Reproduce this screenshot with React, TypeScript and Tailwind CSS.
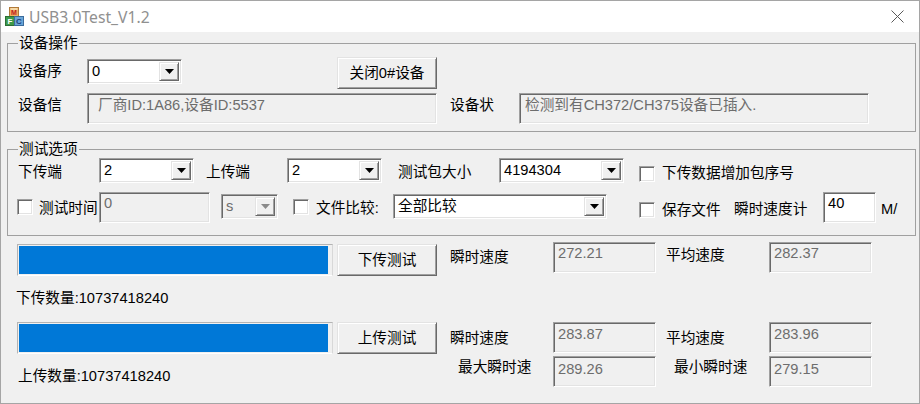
const sunken =
  'border border-t-[#a0a0a0] border-l-[#a0a0a0] border-r-white border-b-white shadow-[inset_1px_1px_0_#696969,inset_-1px_-1px_0_#e3e3e3]';
const raised =
  'border border-t-[#e3e3e3] border-l-[#e3e3e3] border-r-[#696969] border-b-[#696969] shadow-[inset_1px_1px_0_#ffffff,inset_-1px_-1px_0_#a0a0a0]';

function Combo({ value, className, disabled }: { value: string; className: string; disabled?: boolean }) {
  return (
    <div className={`${sunken} ${className} h-[25px] shrink-0 flex p-[2px] ${disabled ? 'bg-[#f0f0f0] text-[#6d6d6d]' : 'bg-white text-black'}`}>
      <span className="flex-1 pl-[2px] leading-[19px] whitespace-nowrap">{value}</span>
      <span className={`${raised} w-[20px] bg-[#f0f0f0] flex items-center justify-center`}>
        <svg width="9" height="5" viewBox="0 0 9 5">
          <path d="M0 0h9L4.500 5z" fill={disabled ? '#8a8a8a' : '#000'} />
        </svg>
      </span>
    </div>
  );
}

function Edit({ value, className, white, top }: { value: string; className: string; white?: boolean; top?: string }) {
  return (
    <div className={`${sunken} ${className} shrink-0 whitespace-nowrap ${top ?? 'pt-[1px]'} ${white ? 'bg-white text-black' : 'bg-[#f0f0f0] text-[#6d6d6d]'}`}>
      {value}
    </div>
  );
}

function Check({ className }: { className: string }) {
  return <span className={`${sunken} ${className} block w-[16px] h-[16px] shrink-0 bg-white`} />;
}

function Button({ label, className }: { label: string; className: string }) {
  return (
    <button className={`${raised} ${className} w-[100px] h-[32px] shrink-0 bg-[#f0f0f0] text-black text-center`}>
      {label}
    </button>
  );
}

function Progress({ className }: { className: string }) {
  return (
    <div className={`${className} w-[316px] h-[32px] shrink-0 p-[1px] border border-t-[#b4b4b4] border-l-[#b4b4b4] border-r-[#d8d8d8] border-b-white`}>
      <div className="w-[309px] h-full bg-[#0078d7]" />
    </div>
  );
}

function Group({ title, className, children }: { title: string; className: string; children: React.ReactNode }) {
  return (
    <fieldset className={`${className} mx-[6px] w-[909px] border border-[#a0a0a0] shrink-0`}>
      <legend className="ml-[10px] px-px leading-[18px] h-[18px] text-black">{title}</legend>
      {children}
    </fieldset>
  );
}

function MfcIcon() {
  return (
    <svg width="19" height="19" viewBox="0 0 19 19" className="ml-[4px] mt-[-1px] shrink-0">
      <rect x="4.500" y="0.500" width="9" height="9" fill="#f0b060" stroke="#b07a3a" />
      <rect x="5.500" y="1" width="7" height="2" fill="#f6d9a8" />
      <rect x="0.500" y="9.500" width="9" height="9" fill="#3f9a4a" stroke="#2c6f35" />
      <rect x="9.500" y="9.500" width="9" height="9" fill="#6aa6d8" stroke="#3c6c9c" />
      <text x="9" y="8" fontSize="7" fontWeight="700" textAnchor="middle" fill="#c02020" fontFamily="Liberation Sans">M</text>
      <text x="5" y="17" fontSize="8" fontWeight="700" textAnchor="middle" fill="#ffffff" fontFamily="Liberation Sans">F</text>
      <text x="14" y="17" fontSize="8" fontWeight="700" textAnchor="middle" fill="#1c3f7a" fontFamily="Liberation Sans">C</text>
    </svg>
  );
}

function SpeedRow({ instant, average, avgTop, instantTop, editTop }: { instant: string; average: string; avgTop: string; instantTop: string; editTop: string }) {
  return (
    <div className="flex items-start">
      <span className={`w-[103px] ml-[13px] ${instantTop}`}>瞬时速度</span>
      <Edit value={instant} className="w-[103px] h-[31px] pl-[4px]" top={editTop} />
      <span className={`w-[103px] ml-[10px] ${avgTop}`}>平均速度</span>
      <Edit value={average} className="w-[103px] h-[31px] pl-[4px]" top={editTop} />
    </div>
  );
}

export default function App() {
  return (
    <div className="w-[920px] h-[404px] overflow-hidden flex flex-col border border-[#a5a5a5] bg-[#f0f0f0] text-black text-[14.67px] leading-[20px] font-['Liberation_Sans','Noto_Sans_CJK_SC',sans-serif]">
      <header className="h-[31px] shrink-0 bg-white flex items-center">
        <MfcIcon />
        <span className="ml-[5px] text-[15.7px] text-[#909090] font-['Noto_Sans',sans-serif]">USB3.0Test_V1.2</span>
        <svg width="13" height="13" viewBox="0 0 13 13" className="ml-auto mr-[15px]">
          <path d="M.5.500l12 12M12.500.500l-12 12" stroke="#5a5a5a" fill="none" />
        </svg>
      </header>

      <Group title="设备操作" className="mt-[2px] h-[98px]">
        <div className="flex items-start mt-[5px] ml-[10px]">
          <span className="w-[69px] mt-[4px]">设备序</span>
          <Combo value="0" className="w-[95px] mt-[2px]" />
          <Button label="关闭0#设备" className="ml-[155px]" />
        </div>
        <div className="flex items-start mt-[4px] ml-[10px]">
          <span className="w-[69px] mt-[2px]">设备信</span>
          <Edit value="厂商ID:1A86,设备ID:5537" className="w-[350px] h-[31px] pl-[10px]" />
          <span className="w-[69px] ml-[13px] mt-[2px]">设备状</span>
          <Edit value="检测到有CH372/CH375设备已插入." className="w-[350px] h-[31px] pl-[5px]" />
        </div>
      </Group>

      <Group title="测试选项" className="mt-[8px] h-[96px]">
        <div className="flex items-start ml-[10px]">
          <span className="w-[81px] mt-[4px]">下传端</span>
          <Combo value="2" className="w-[95px]" />
          <span className="w-[81px] ml-[12px] mt-[4px]">上传端</span>
          <Combo value="2" className="w-[95px]" />
          <span className="w-[101px] ml-[16px] mt-[4px]">测试包大小</span>
          <Combo value="4194304" className="w-[125px]" />
          <Check className="ml-[15px] mt-[8px]" />
          <span className="ml-[7px] mt-[5px]">下传数据增加包序号</span>
        </div>
        <div className="flex items-start ml-[9px] mt-[9px]">
          <Check className="mt-[7px]" />
          <span className="w-[60px] ml-[6px] mt-[6px]">测试时间</span>
          <Edit value="0" className="w-[111px] h-[31px] pl-[4px]" top="pt-0" />
          <Combo value="s" disabled className="w-[57px] ml-[11px] mt-[2px]" />
          <Check className="ml-[15px] mt-[7px]" />
          <span className="w-[77px] ml-[7px] mt-[6px]">文件比较:</span>
          <Combo value="全部比较" className="w-[214px] mt-[2px]" />
          <Check className="ml-[32px] mt-[10px]" />
          <span className="w-[72px] ml-[7px] mt-[8px]">保存文件</span>
          <span className="w-[89px] mt-[7px]">瞬时速度计</span>
          <Edit value="40" white className="w-[53px] h-[31px] pl-[4px]" top="pt-0" />
          <span className="ml-[5px] mt-[7px]">M/</span>
        </div>
      </Group>

      <div className="mt-[6px] ml-[16px] flex items-start">
        <Progress className="mt-[2px]" />
        <Button label="下传测试" className="ml-[4px] mt-[2px]" />
        <SpeedRow instant="272.21" average="282.37" instantTop="mt-[5px]" avgTop="mt-[3px]" editTop="pt-0" />
      </div>
      <div className="ml-[15px] mt-[12px] h-[34px]">下传数量:10737418240</div>
      <div className="ml-[16px] flex items-start">
        <Progress className="" />
        <Button label="上传测试" className="ml-[4px]" />
        <SpeedRow instant="283.87" average="283.96" instantTop="mt-[6px]" avgTop="mt-[6px]" editTop="pt-[1px]" />
      </div>
      <div className="ml-[17px] mt-[2px] flex items-start">
        <span className="w-[440px] mt-[10px]">上传数量:10737418240</span>
        <span className="w-[95px] mt-[1px]">最大瞬时速</span>
        <Edit value="289.26" className="w-[103px] h-[31px] pl-[4px]" top="pt-[2px]" />
        <span className="w-[95px] ml-[18px] mt-[1px]">最小瞬时速</span>
        <Edit value="279.15" className="w-[103px] h-[31px] pl-[4px]" top="pt-[2px]" />
      </div>
    </div>
  );
}
